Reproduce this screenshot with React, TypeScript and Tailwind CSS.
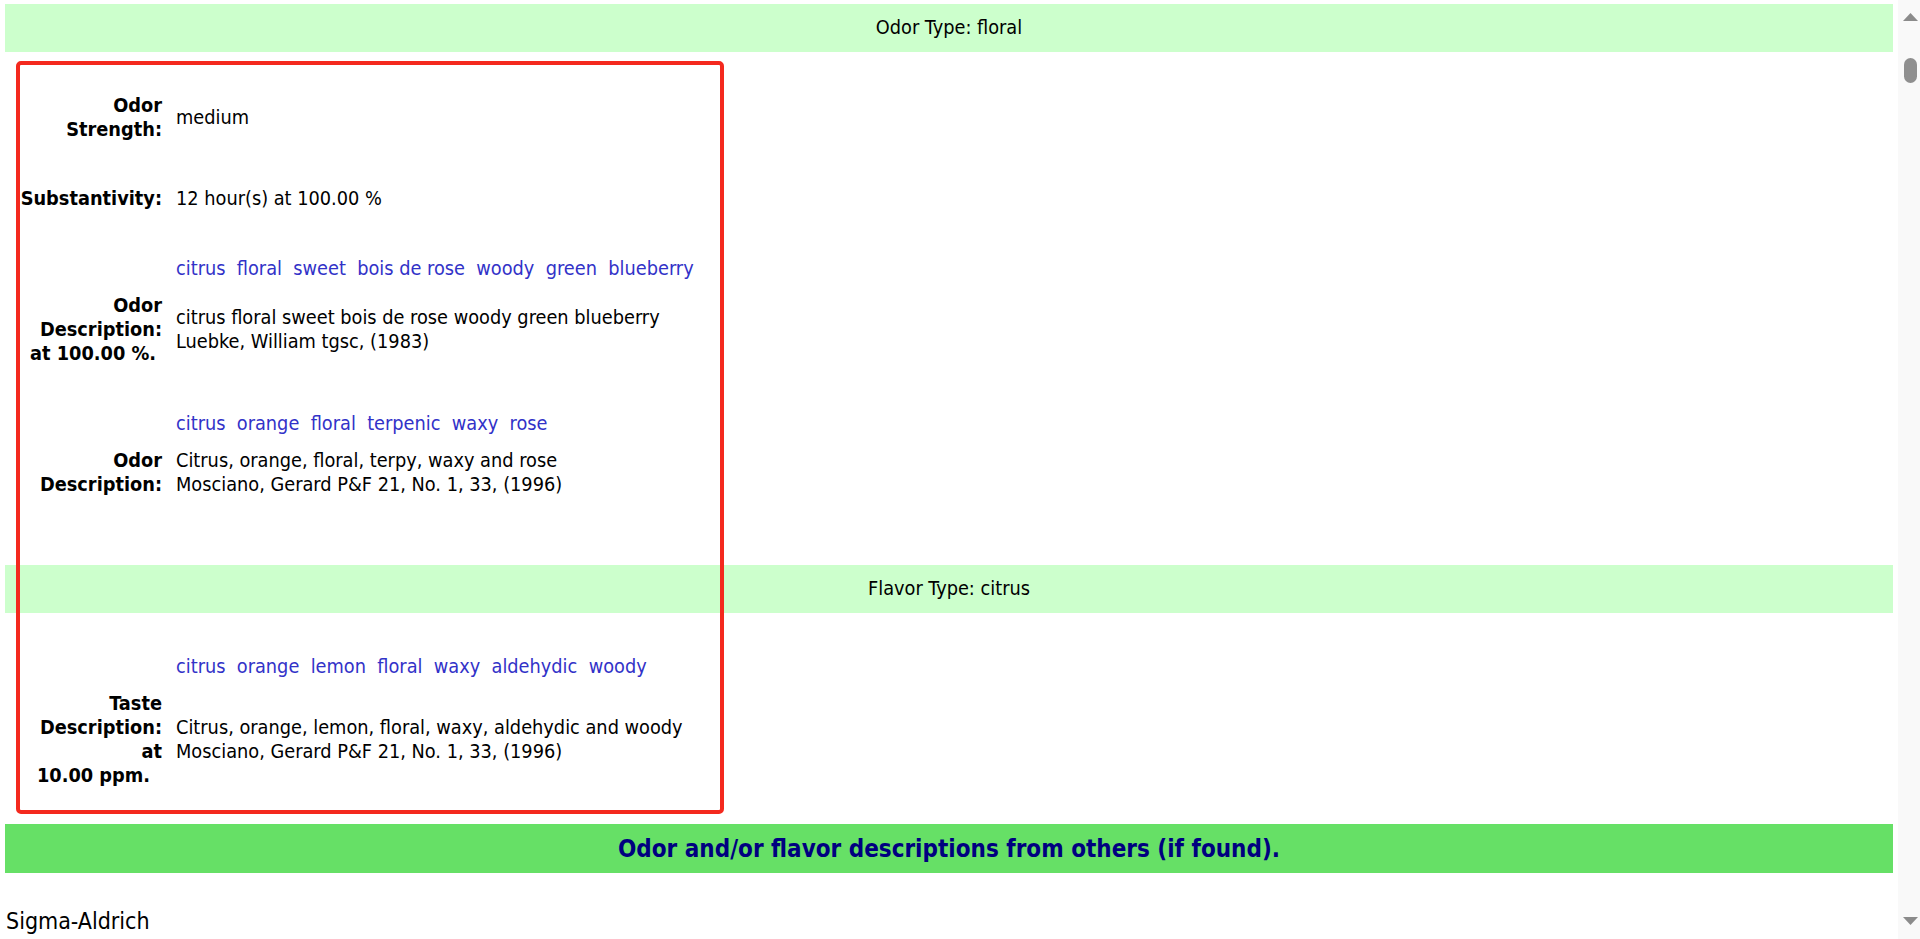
import React from "react";

const linkCls = "text-[#3232c8] hover:underline cursor-pointer";

function Links({ words }: { words: string[] }) {
  return (
    <div className="pl-[171px] whitespace-nowrap">
      {words.map((w, i) => (
        <React.Fragment key={w}>
          <a className={linkCls}>{w}</a>
          {i < words.length - 1 ? "\u00a0 " : ""}
        </React.Fragment>
      ))}
    </div>
  );
}

function Row({ label, value, className = "" }: { label: React.ReactNode; value: React.ReactNode; className?: string }) {
  return (
    <div className={`flex items-center ${className}`}>
      <div className="w-[157px] shrink-0 text-right font-bold text-[19.75px] whitespace-nowrap">{label}</div>
      <div className="pl-[14px] whitespace-nowrap">{value}</div>
    </div>
  );
}

function Scrollbar() {
  return (
    <div className="w-[22px] shrink-0 bg-[#f9f9f9] flex flex-col items-center">
      <svg className="mt-[13px] ml-[2px]" width="15" height="8" viewBox="0 0 15 8">
        <polygon points="7.5,0 15,8 0,8" fill="#8b8b8b" />
      </svg>
      <div className="mt-[37px] ml-[2px] w-[13px] h-[25px] rounded-full bg-[#8f8f8f]" />
      <div className="flex-1" />
      <svg className="mb-[14px] ml-[2px]" width="15" height="8" viewBox="0 0 15 8">
        <polygon points="0,0 15,0 7.5,8" fill="#8b8b8b" />
      </svg>
    </div>
  );
}

export default function App() {
  return (
    <div className="relative flex h-[939px] w-full overflow-hidden bg-white text-black font-['DejaVu_Sans_Condensed','Liberation_Sans',sans-serif] text-[19.75px] leading-[24px]">
      <main className="flex-1 min-w-0 px-[5px] pt-[4px]">
        <div className="h-[48px] bg-[#ccffcc] flex items-center justify-center">Odor Type: floral</div>

        <Row
          className="mt-[42px]"
          label={<><div>Odor</div><div>Strength:</div></>}
          value="medium"
        />
        <Row className="mt-[45px]" label="Substantivity:" value="12 hour(s) at 100.00 %" />

        <div className="mt-[46px]">
          <Links words={["citrus", "floral", "sweet", "bois de rose", "woody", "green", "blueberry"]} />
        </div>
        <Row
          className="mt-[13px]"
          label={<><div>Odor</div><div>Description:</div><div className="pr-[6px]">at 100.00 %.</div></>}
          value={<><div>citrus floral sweet bois de rose woody green blueberry</div><div>Luebke, William tgsc, (1983)</div></>}
        />

        <div className="mt-[46px]">
          <Links words={["citrus", "orange", "floral", "terpenic", "waxy", "rose"]} />
        </div>
        <Row
          className="mt-[13px]"
          label={<><div>Odor</div><div>Description:</div></>}
          value={<><div>Citrus, orange, floral, terpy, waxy and rose</div><div>Mosciano, Gerard P&amp;F 21, No. 1, 33, (1996)</div></>}
        />

        <div className="mt-[68px] h-[48px] bg-[#ccffcc] flex items-center justify-center">Flavor Type: citrus</div>

        <div className="mt-[42px]">
          <Links words={["citrus", "orange", "lemon", "floral", "waxy", "aldehydic", "woody"]} />
        </div>
        <Row
          className="mt-[13px]"
          label={<><div>Taste</div><div>Description:</div><div>at</div><div className="pr-[12px]">10.00 ppm.</div></>}
          value={<><div>Citrus, orange, lemon, floral, waxy, aldehydic and woody</div><div>Mosciano, Gerard P&amp;F 21, No. 1, 33, (1996)</div></>}
        />

        <div className="mt-[36px] h-[49px] bg-[#66e066] flex items-center justify-center text-[#000080] font-bold text-[24px]">
          Odor and/or flavor descriptions from others (if found).
        </div>

        <div className="mt-[34px] pl-[1px] text-[23px] leading-[29px]">Sigma-Aldrich</div>
      </main>
      <Scrollbar />

      <div className="pointer-events-none absolute left-[16px] top-[61px] w-[708px] h-[753px] border-4 border-[#f4291e] rounded-[5px]" />
    </div>
  );
}
